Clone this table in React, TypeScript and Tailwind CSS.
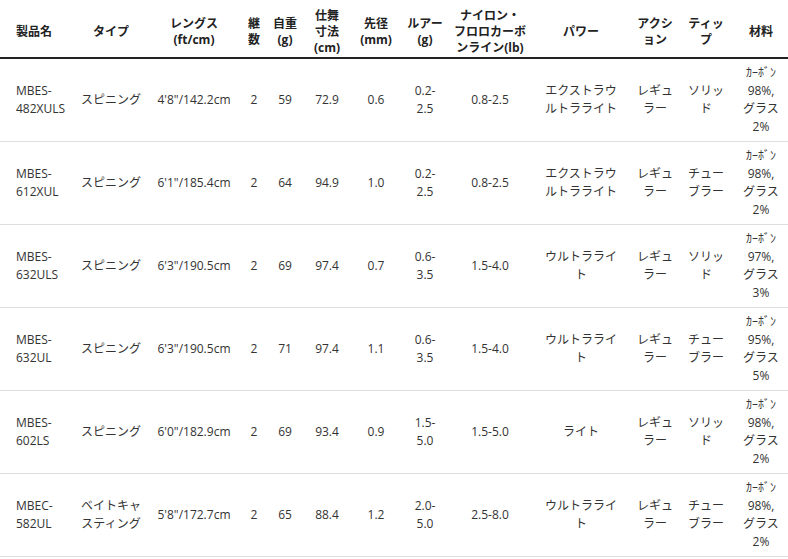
import React from 'react';

const cols = 'grid grid-cols-[74px_74px_92px_28px_34px_50px_48px_50px_80px_102px_46px_56px_54px]';

const headers: string[][] = [
  ['製品名'],
  ['タイプ'],
  ['レングス', '(ft/cm)'],
  ['継', '数'],
  ['自重', '(g)'],
  ['仕舞', '寸法', '(cm)'],
  ['先径', '(mm)'],
  ['ルアー', '(g)'],
  ['ナイロン・', 'フロロカーボ', 'ンライン(lb)'],
  ['パワー'],
  ['アクシ', 'ョン'],
  ['ティッ', 'プ'],
  ['材料'],
];

const rows: string[][][] = [
  [['MBES-', '482XULS'], ['スピニング'], ['4\'8"/142.2cm'], ['2'], ['59'], ['72.9'], ['0.6'], ['0.2-', '2.5'], ['0.8-2.5'], ['エクストラウ', 'ルトラライト'], ['レギュ', 'ラー'], ['ソリッ', 'ド'], ['ｶｰﾎﾞﾝ', '98%,', 'グラス', '2%']],
  [['MBES-', '612XUL'], ['スピニング'], ['6\'1"/185.4cm'], ['2'], ['64'], ['94.9'], ['1.0'], ['0.2-', '2.5'], ['0.8-2.5'], ['エクストラウ', 'ルトラライト'], ['レギュ', 'ラー'], ['チュー', 'ブラー'], ['ｶｰﾎﾞﾝ', '98%,', 'グラス', '2%']],
  [['MBES-', '632ULS'], ['スピニング'], ['6\'3"/190.5cm'], ['2'], ['69'], ['97.4'], ['0.7'], ['0.6-', '3.5'], ['1.5-4.0'], ['ウルトラライ', 'ト'], ['レギュ', 'ラー'], ['ソリッ', 'ド'], ['ｶｰﾎﾞﾝ', '97%,', 'グラス', '3%']],
  [['MBES-', '632UL'], ['スピニング'], ['6\'3"/190.5cm'], ['2'], ['71'], ['97.4'], ['1.1'], ['0.6-', '3.5'], ['1.5-4.0'], ['ウルトラライ', 'ト'], ['レギュ', 'ラー'], ['チュー', 'ブラー'], ['ｶｰﾎﾞﾝ', '95%,', 'グラス', '5%']],
  [['MBES-', '602LS'], ['スピニング'], ['6\'0"/182.9cm'], ['2'], ['69'], ['93.4'], ['0.9'], ['1.5-', '5.0'], ['1.5-5.0'], ['ライト'], ['レギュ', 'ラー'], ['ソリッ', 'ド'], ['ｶｰﾎﾞﾝ', '98%,', 'グラス', '2%']],
  [['MBEC-', '582UL'], ['ベイトキャ', 'スティング'], ['5\'8"/172.7cm'], ['2'], ['65'], ['88.4'], ['1.2'], ['2.0-', '5.0'], ['2.5-8.0'], ['ウルトラライ', 'ト'], ['レギュ', 'ラー'], ['チュー', 'ブラー'], ['ｶｰﾎﾞﾝ', '98%,', 'グラス', '2%']],
];

const Lines: React.FC<{ lines: string[] }> = ({ lines }) => (
  <>
    {lines.map((l, i) => (
      <div key={i} className="whitespace-nowrap">{l}</div>
    ))}
  </>
);

export default function App() {
  return (
    <div className="w-[788px] bg-white font-['Open_Sans','Noto_Sans_CJK_JP',sans-serif] text-[12px]">
      <div className={`${cols} h-[59px] border-b-2 border-[#222] pt-[6px] font-bold text-[#222] leading-[16px]`}>
        {headers.map((h, i) => (
          <div key={i} className={`flex flex-col justify-center ${i === 0 ? 'items-start pl-4' : 'items-center text-center'}`}>
            <Lines lines={h} />
          </div>
        ))}
      </div>
      {rows.map((r, ri) => (
        <div key={ri} className={`${cols} h-[83px] border-b border-[#dedede] leading-[18px] text-[#333]`}>
          {r.map((c, ci) => (
            <div key={ci} className={`flex flex-col justify-center ${ci === 0 ? 'items-start pl-4' : 'items-center text-center'}`}>
              <Lines lines={c} />
            </div>
          ))}
        </div>
      ))}
    </div>
  );
}
